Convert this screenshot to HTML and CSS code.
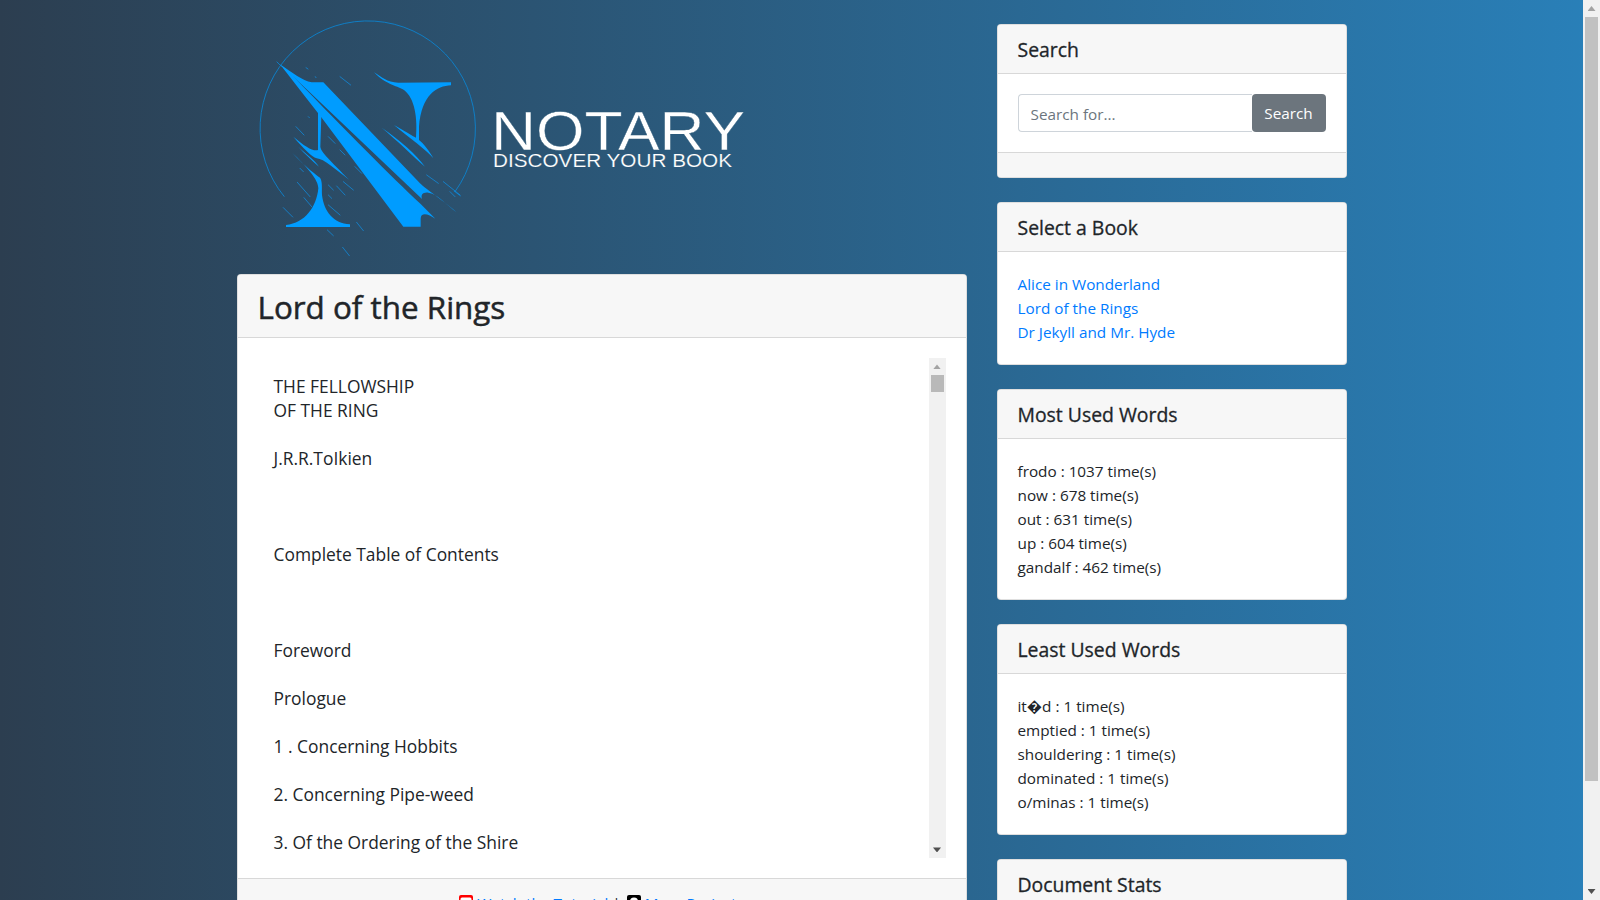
FILE: index.html
```html
<!DOCTYPE html>
<html lang="en">
<head>
<meta charset="utf-8">
<title>Notary</title>
<link rel="stylesheet" href="styles.css">
</head>
<body>
<div class="page-scrollbar" aria-hidden="true">
  <span class="arrow-up"></span>
  <span class="page-thumb"></span>
  <span class="arrow-down arrow-end"></span>
</div>
<div class="container">
  <main class="main-col">
    <svg class="logo" viewBox="237 0 730 274" role="img" aria-label="Notary logo">
      <g transform="translate(250 15) scale(.33333)">
        <path class="ring" d="M103 545A323 323 0 1 1 615 530"/>
        <path class="ring" d="M80 140L95 155M612 528L632 543"/>
        <path class="ink" d="M90 148C125 172 158 198 185 202L220 202L510 505C530 525 585 560 620 592C590 570 560 535 535 533C518 531 512 540 516 552L150 204L128 182C300 360 420 480 512 567L556 611C535 596 512 590 512 612L512 635L460 635L215 308L150 225Z"/>
        <path class="ink" d="M204 288L214 303L211 395C213 412 240 435 298 495C255 462 222 432 200 430C185 425 160 400 130 365C165 395 190 410 204 405Z"/>
        <path class="ink" d="M125 412C150 440 190 475 210 488C218 500 215 520 216 540C222 590 250 625 300 628L300 636L108 636L108 630C165 625 200 575 205 520C206 495 170 455 125 412Z"/>
        <path class="ink" d="M372 172C395 185 410 203 445 203L603 202L603 211C560 213 515 240 507 335L507 375C520 385 540 410 550 430C530 405 480 370 432 330C460 345 490 365 498 368C503 310 495 250 462 225C435 210 410 210 372 172Z"/>
        <path class="ink" d="M395 338C450 375 500 420 525 455C490 425 440 375 395 338Z"/>
        <path class="ink" d="M145 395C165 415 195 435 207 455C185 435 165 418 145 395Z"/>
        <path class="streaks" d="M138 335L162 360M270 185L302 210M100 578L128 606M142 502L180 545M280 500L310 525M260 513L285 540M235 570L270 600M320 622L340 647M232 645L250 662M278 697L298 722M162 548L185 575M235 365L255 385M270 405L285 420M315 455L335 475M530 480L565 505M580 500L630 540M600 530L615 545M235 510L250 525M235 540L245 550M168 158L174 162M196 185L198 188M175 305L178 308M150 460L160 470"/>
      </g>
      <text class="logo-title" x="491" y="150" textLength="254" lengthAdjust="spacingAndGlyphs">NOTARY</text>
      <text class="logo-sub" x="493" y="167" textLength="239" lengthAdjust="spacingAndGlyphs">DISCOVER YOUR BOOK</text>
    </svg>

    <section class="card">
      <header class="card-header"><h2 class="book-title">Lord of the Rings</h2></header>
      <div class="card-body">
        <div class="book-scroll">
<pre class="book-text">THE FELLOWSHIP
OF THE RING

J.R.R.ToIkien



Complete Table of Contents



Foreword

Prologue

1 . Concerning Hobbits

2. Concerning Pipe-weed

3. Of the Ordering of the Shire

4. Of the Finding of the Ring

Note on the Shire Records</pre>
          <div class="book-scrollbar" aria-hidden="true">
            <span class="arrow-up"></span>
            <span class="book-thumb"></span>
            <span class="arrow-down arrow-end"></span>
          </div>
        </div>
      </div>
      <footer class="card-footer main-footer">
        <svg class="foot-icon" viewBox="0 0 14 14"><rect width="14" height="14" rx="2" fill="#f00"/><rect x="1.5" y="2.5" width="11" height="9" rx="1.5" fill="#fff"/><path d="M5.5 5l4 2-4 2z" fill="#f00"/></svg>
        <a href="#">Watch the Tutorial</a> |
        <svg class="foot-icon foot-icon-next" viewBox="0 0 14 14"><rect width="14" height="14" rx="2" fill="#000"/><circle cx="7" cy="6.5" r="4" fill="#fff"/></svg>
        <a href="#">More Projects</a>
      </footer>
    </section>
  </main>

  <aside class="side-col">
    <section class="card">
      <header class="card-header"><h5 class="card-title">Search</h5></header>
      <div class="card-body">
        <form class="input-group">
          <input class="search-input" type="text" placeholder="Search for...">
          <button class="search-btn" type="button">Search</button>
        </form>
      </div>
      <footer class="card-footer empty-footer"></footer>
    </section>

    <section class="card">
      <header class="card-header"><h5 class="card-title">Select a Book</h5></header>
      <div class="card-body lines">
        <a href="#">Alice in Wonderland</a>
        <a href="#">Lord of the Rings</a>
        <a href="#">Dr Jekyll and Mr. Hyde</a>
      </div>
    </section>

    <section class="card">
      <header class="card-header"><h5 class="card-title">Most Used Words</h5></header>
      <div class="card-body lines">
        <span>frodo : 1037 time(s)</span>
        <span>now : 678 time(s)</span>
        <span>out : 631 time(s)</span>
        <span>up : 604 time(s)</span>
        <span>gandalf : 462 time(s)</span>
      </div>
    </section>

    <section class="card">
      <header class="card-header"><h5 class="card-title">Least Used Words</h5></header>
      <div class="card-body lines">
        <span>it�d : 1 time(s)</span>
        <span>emptied : 1 time(s)</span>
        <span>shouldering : 1 time(s)</span>
        <span>dominated : 1 time(s)</span>
        <span>o/minas : 1 time(s)</span>
      </div>
    </section>

    <section class="card">
      <header class="card-header"><h5 class="card-title">Document Stats</h5></header>
      <div class="card-body lines">
        <span>Word count : 177227</span>
        <span>Unique words : 11860</span>
      </div>
    </section>
  </aside>
</div>
</body>
</html>
```
FILE: styles.css
```css
* { box-sizing: border-box; }

body {
  margin: 0;
  padding-right: 17px;
  background: linear-gradient(to right, #2c3e50, #2980b9);
  color: #212529;
  font-family: "Open Sans", "Noto Sans", sans-serif;
  font-size: 15.3px;
  line-height: 24px;
}

a { color: #007bff; text-decoration: none; }

.container {
  width: 1140px;
  margin: 0 auto;
  padding: 0 15px;
  display: flex;
  gap: 30px;
  align-items: flex-start;
}

.main-col { width: 730px; }
.side-col { width: 350px; padding-top: 24px; }

.logo { display: block; width: 730px; height: 274px; }
.ring { fill: none; stroke: #0a87d6; stroke-width: 2.5; }
.ink { fill: #009cff; }
.streaks { fill: none; stroke: #0a95f2; stroke-width: 2; stroke-linecap: round; }
.logo-title, .logo-sub {
  font-family: "Liberation Sans", Arial, sans-serif;
  fill: #fff;
  stroke: #2b5877;
}
.logo-title { font-size: 56px; stroke-width: .4px; }
.logo-sub { font-size: 18.4px; stroke-width: .15px; }

.card {
  background: #fff;
  border: 1px solid rgba(0, 0, 0, .125);
  border-radius: 4px;
  margin-bottom: 24px;
}

.card-header {
  padding: 12px 20px;
  background: #f7f7f7;
  border-bottom: 1px solid rgba(0, 0, 0, .125);
  border-radius: 3px 3px 0 0;
}

.card-title {
  position: relative;
  top: 1px;
  margin: 0;
  font-size: 19.4px;
  font-weight: 400;
  line-height: 24px;
  -webkit-text-stroke: .3px #212529;
}

.book-title {
  position: relative;
  top: 1px;
  margin: 0;
  font-size: 31.4px;
  font-weight: 400;
  line-height: 38.4px;
  -webkit-text-stroke: .5px #212529;
}

.card-body { padding: 20px; }

.card-footer {
  background: #f7f7f7;
  border-top: 1px solid rgba(0, 0, 0, .125);
  border-radius: 0 0 3px 3px;
}

.empty-footer { height: 25px; }

.main-footer {
  padding: 12px 20px;
  text-align: center;
}

.foot-icon {
  display: inline-block;
  width: 14px;
  height: 14px;
  vertical-align: 0;
}
.foot-icon-next { margin-left: 2px; }

.book-scroll {
  position: relative;
  height: 500px;
  overflow: hidden;
}

.book-text {
  margin: 0;
  padding: 16px 16px;
  font: inherit;
  font-size: 17.4px;
  white-space: pre-wrap;
}

.input-group { display: flex; }

.search-input {
  flex: 1 1 auto;
  min-width: 0;
  height: 38px;
  padding: 7px 12px 5px;
  border: 1px solid #ced4da;
  border-right: 0;
  border-radius: 4px 0 0 4px;
  font: inherit;
  color: #495057;
  outline: none;
}
.search-input::placeholder { color: #6c757d; opacity: 1; }

.search-btn {
  width: 74px;
  height: 38px;
  padding: 0;
  border: 0;
  border-radius: 4px;
  background: #6c757d;
  color: #fff;
  font: inherit;
}

.lines { display: flex; flex-direction: column; align-items: flex-start; }

.page-scrollbar, .book-scrollbar {
  display: flex;
  flex-direction: column;
  align-items: center;
  width: 17px;
  background: #f1f1f1;
}
.page-scrollbar { position: fixed; top: 0; right: 0; height: 100vh; }
.book-scrollbar { position: absolute; top: 0; right: 0; height: 500px; }

.page-thumb, .book-thumb { display: block; width: 13px; }
.page-thumb { height: 764px; background: #c1c1c1; }
.book-thumb { height: 17px; background: #b9b9b9; }

.arrow-up, .arrow-down {
  display: block;
  flex: none;
  width: 8px;
  height: 17px;
  background-repeat: no-repeat;
  background-size: 8px 5px;
  background-position: center;
}
.arrow-up { background-image: linear-gradient(#a3a3a3, #a3a3a3); clip-path: polygon(50% 6px, 100% 11px, 0 11px); }
.arrow-down { background-image: linear-gradient(#505050, #505050); clip-path: polygon(0 6px, 100% 6px, 50% 11px); }
.arrow-end { margin-top: auto; }
```
